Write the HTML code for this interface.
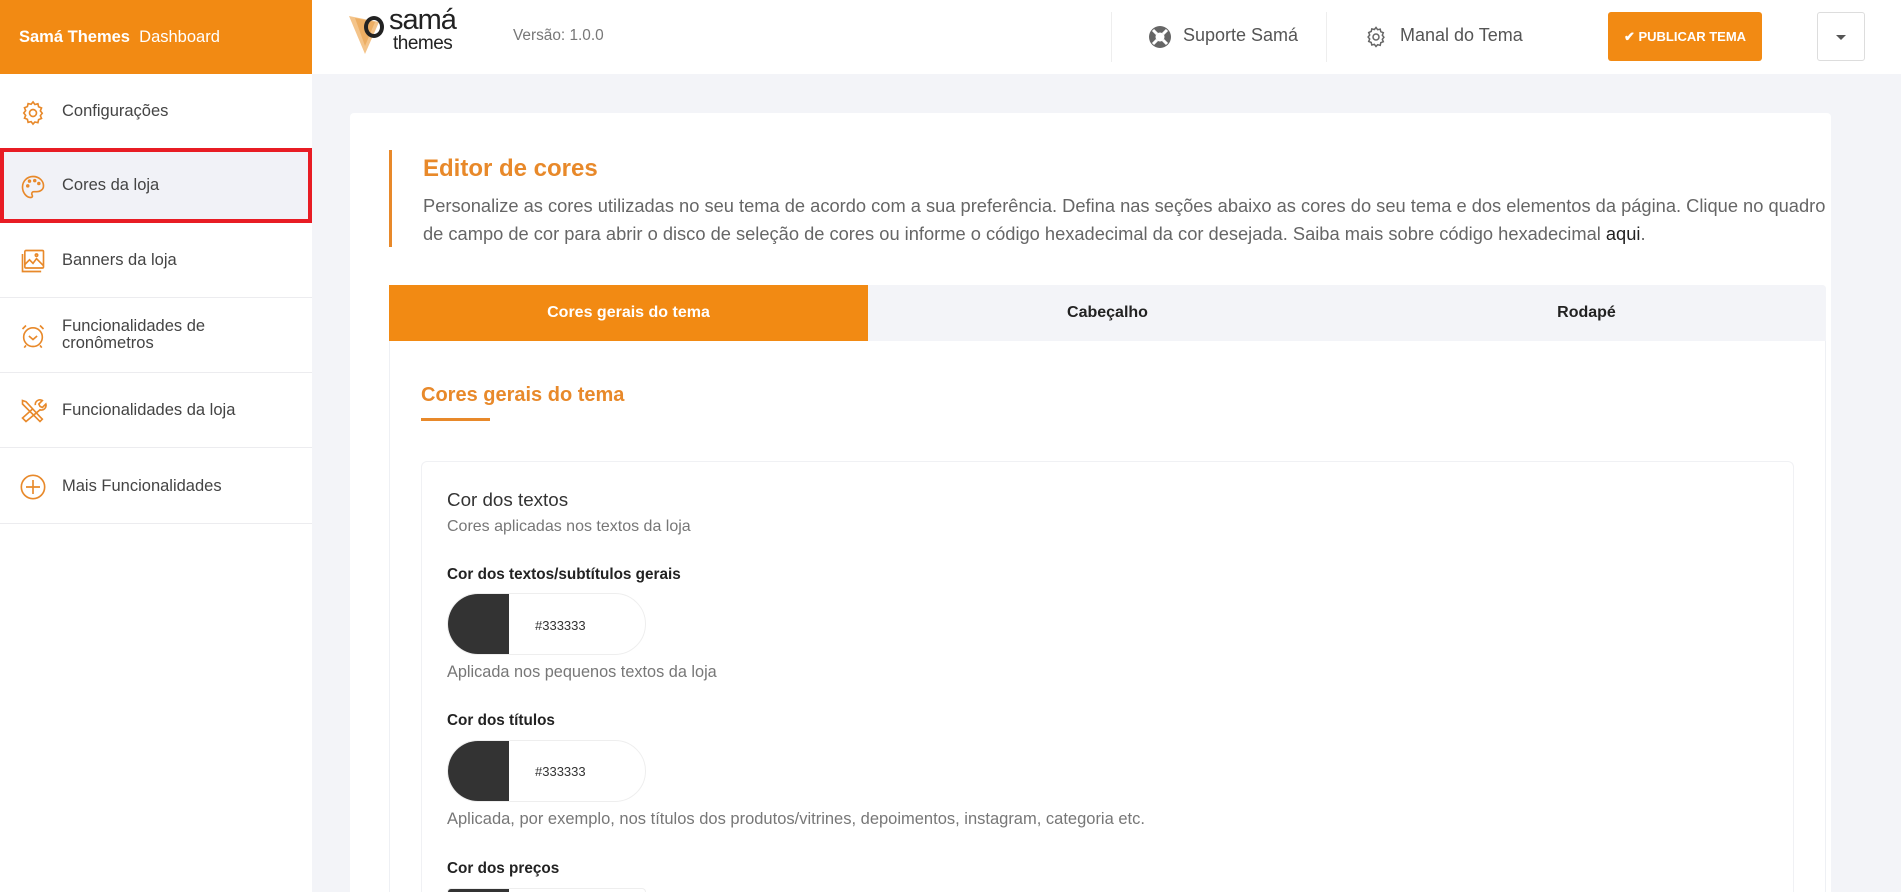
<!DOCTYPE html>
<html style="width:1901px;height:892px;overflow:hidden"><head><meta charset="utf-8"><style>
*{box-sizing:border-box;margin:0;padding:0}
body{width:1901px;height:892px;overflow:hidden;background:#f3f4f8;font-family:"Liberation Sans",sans-serif;color:#333;position:relative}
.abs{position:absolute}
.side{left:0;top:0;width:312px;height:892px;background:#fff}
.brand{left:0;top:0;width:312px;height:74px;background:#f28a13;color:#fff;font-size:16.5px;line-height:74px;padding-left:19px;white-space:nowrap}
.item{left:0;width:312px;height:75px;border-bottom:1px solid #ececef;display:flex;align-items:center;padding-left:62px;font-size:16.5px;color:#444}
.item svg{position:absolute;left:19px;top:50%;margin-top:-13px}
.top{left:312px;top:0;width:1589px;height:74px;background:#fff}
.card{left:350px;top:113px;width:1481px;height:779px;background:#fff;border-radius:4px 4px 0 0}
.t{white-space:nowrap}
</style></head><body>
<div class="abs side"></div>
<div class="abs brand"><b>Samá Themes</b>&nbsp; Dashboard</div>

<div class="abs item" style="top:74px;border:none">
<svg width="28" height="28" viewBox="0 0 24 24" fill="none" stroke="#e8892a" stroke-width="1.4"><circle cx="12" cy="12" r="3"/><path d="M12 2.5l1.6 2.2 2.6-.6.6 2.6 2.5 1-1 2.5 1.6 2-1.6 2.1 1 2.4-2.5 1-.6 2.6-2.6-.6L12 21.5l-1.6-2.1-2.6.6-.6-2.6-2.5-1 1-2.4L4.1 12l1.6-2-1-2.5 2.5-1 .6-2.6 2.6.6z"/></svg>Configurações</div>

<div class="abs item" style="top:148px;height:75px;background:#f1f2f7;border:4px solid #e81c24;padding-left:58px">
<svg width="28" height="28" viewBox="0 0 24 24" fill="none" stroke="#e8892a" stroke-width="1.4" style="left:15px"><path d="M12 3C7 3 3 7 3 12s3.5 9 7 9c1.5 0 1.8-1.2 1.2-2.2-.7-1.2 0-2.8 1.5-2.8H15c3.5 0 6-2 6-5 0-4.5-4-8-9-8z"/><circle cx="7.5" cy="11" r=".8"/><circle cx="9" cy="7" r=".8"/><circle cx="13.5" cy="6.5" r=".8"/><circle cx="17" cy="9" r=".8"/></svg>Cores da loja</div>

<div class="abs item" style="top:223px">
<svg width="28" height="28" viewBox="0 0 24 24" fill="none" stroke="#e8892a" stroke-width="1.4"><rect x="5" y="3" width="16" height="15" rx="1"/><path d="M3 6v15h16"/><path d="M5 15l4-4 3 3 3-4 6 6"/><circle cx="15" cy="7" r="1"/></svg>Banners da loja</div>

<div class="abs item" style="top:298px;line-height:17px">
<svg width="28" height="28" viewBox="0 0 24 24" fill="none" stroke="#e8892a" stroke-width="1.4"><circle cx="12" cy="13" r="8"/><path d="M8.5 12l3.5 3 3.5-3M3 6l3-3M21 6l-3-3M6 20l-1.5 2M18 20l1.5 2"/></svg>Funcionalidades de<br>cronômetros</div>

<div class="abs item" style="top:373px">
<svg width="28" height="28" viewBox="0 0 24 24" fill="none" stroke="#e8892a" stroke-width="1.4"><path d="M3 3l3 1 12 13 2 2-2 2-2-2L3 6zM14 7a4 4 0 0 1 6-4l-3 3 1 2 2 1 3-3a4 4 0 0 1-5 5L6 21l-3-3 9-8"/></svg>Funcionalidades da loja</div>

<div class="abs item" style="top:449px">
<svg width="28" height="28" viewBox="0 0 24 24" fill="none" stroke="#e8892a" stroke-width="1.4"><circle cx="12" cy="12" r="10"/><path d="M12 6v12M6 12h12"/></svg>Mais Funcionalidades</div>

<div class="abs top"></div>
<svg class="abs" style="left:349px;top:12px" width="40" height="44" viewBox="0 0 40 44"><path d="M0 4l30 6-14 32z" fill="#f4c48a"/><path d="M6 6l20 4-10 24z" fill="#e8a04a" opacity=".6"/></svg>
<div class="abs" style="left:364px;top:16px;width:20px;height:22px;border:4px solid #222;border-radius:50%"></div>
<div class="abs t" style="left:389px;top:4px;font-size:29px;color:#222;letter-spacing:-1px">samá</div>
<div class="abs t" style="left:393px;top:33px;font-size:19px;color:#222;letter-spacing:-.5px">themes</div>
<div class="abs t" style="left:513px;top:27px;font-size:15.4px;color:#777">Versão: 1.0.0</div>

<div class="abs" style="left:1111px;top:12px;width:1px;height:50px;background:#eee"></div>
<div class="abs" style="left:1326px;top:12px;width:1px;height:50px;background:#eee"></div>
<svg class="abs" style="left:1148px;top:25px" width="24" height="24" viewBox="0 0 24 24"><circle cx="12" cy="12" r="11" fill="#666"/><circle cx="12" cy="12" r="4.5" fill="#fff"/><path d="M5 5l4 4M19 5l-4 4M5 19l4-4M19 19l-4-4" stroke="#fff" stroke-width="3"/></svg>
<div class="abs t" style="left:1183px;top:25px;font-size:18px;color:#555">Suporte Samá</div>
<svg class="abs" style="left:1364px;top:25px" width="24" height="24" viewBox="0 0 24 24" fill="none" stroke="#666" stroke-width="1.5"><circle cx="12" cy="12" r="3"/><path d="M12 2.5l1.6 2.2 2.6-.6.6 2.6 2.5 1-1 2.5 1.6 2-1.6 2.1 1 2.4-2.5 1-.6 2.6-2.6-.6L12 21.5l-1.6-2.1-2.6.6-.6-2.6-2.5-1 1-2.4L4.1 12l1.6-2-1-2.5 2.5-1 .6-2.6 2.6.6z"/></svg>
<div class="abs t" style="left:1400px;top:25px;font-size:18px;color:#555">Manal do Tema</div>
<div class="abs t" style="left:1608px;top:12px;width:154px;height:49px;background:#f28a13;border-radius:3px;color:#fff;font-size:13px;font-weight:bold;text-align:center;line-height:49px">✔ PUBLICAR TEMA</div>
<div class="abs" style="left:1817px;top:12px;width:48px;height:49px;border:1px solid #ddd;border-radius:3px;background:#fff"></div>
<div class="abs" style="left:1836px;top:35px;border-left:5px solid transparent;border-right:5px solid transparent;border-top:5px solid #555"></div>

<div class="abs card"></div>
<div class="abs" style="left:389px;top:150px;width:3px;height:97px;background:#e8892a"></div>
<div class="abs t" style="left:423px;top:155px;font-size:24px;font-weight:bold;color:#e8892a">Editor de cores</div>
<div class="abs t" style="left:423px;top:192px;font-size:18.3px;line-height:28px;color:#666">Personalize as cores utilizadas no seu tema de acordo com a sua preferência. Defina nas seções abaixo as cores do seu tema e dos elementos da página. Clique no quadro<br>de campo de cor para abrir o disco de seleção de cores ou informe o código hexadecimal da cor desejada. Saiba mais sobre código hexadecimal <span style="color:#222">aqui</span>.</div>

<div class="abs" style="left:389px;top:285px;width:1437px;height:607px;border:1px solid #eef0f4;border-bottom:none;border-radius:4px 4px 0 0"></div>
<div class="abs" style="left:389px;top:285px;width:1437px;height:56px;background:#f3f4f8;border-radius:4px 4px 0 0"></div>
<div class="abs t" style="left:389px;top:285px;width:479px;height:56px;background:#f28a13;color:#fff;font-weight:bold;font-size:16px;text-align:center;line-height:56px">Cores gerais do tema</div>
<div class="abs t" style="left:868px;top:285px;width:479px;line-height:56px;text-align:center;font-weight:bold;font-size:16px;color:#222">Cabeçalho</div>
<div class="abs t" style="left:1347px;top:285px;width:479px;line-height:56px;text-align:center;font-weight:bold;font-size:16px;color:#222">Rodapé</div>

<div class="abs t" style="left:421px;top:384px;font-size:20px;font-weight:bold;color:#e8892a">Cores gerais do tema</div>
<div class="abs" style="left:421px;top:418px;width:69px;height:3px;background:#e8892a"></div>

<div class="abs" style="left:421px;top:461px;width:1373px;height:431px;border:1px solid #f0f1f4;border-bottom:none;border-radius:6px 6px 0 0"></div>
<div class="abs t" style="left:447px;top:489px;font-size:18.8px;color:#333">Cor dos textos</div>
<div class="abs t" style="left:447px;top:518px;font-size:16px;color:#777">Cores aplicadas nos textos da loja</div>

<div class="abs t" style="left:447px;top:566px;font-size:15.3px;font-weight:bold;color:#222">Cor dos textos/subtítulos gerais</div>
<div class="abs" style="left:447px;top:593px;width:199px;height:62px;border:1px solid #eee;border-radius:31px;overflow:hidden;background:#fff"><div style="width:61px;height:62px;background:#333"></div></div>
<div class="abs t" style="left:535px;top:618px;font-size:13px;color:#333">#333333</div>
<div class="abs t" style="left:447px;top:663px;font-size:16.3px;color:#777">Aplicada nos pequenos textos da loja</div>

<div class="abs t" style="left:447px;top:712px;font-size:15.3px;font-weight:bold;color:#222">Cor dos títulos</div>
<div class="abs" style="left:447px;top:740px;width:199px;height:62px;border:1px solid #eee;border-radius:31px;overflow:hidden;background:#fff"><div style="width:61px;height:62px;background:#333"></div></div>
<div class="abs t" style="left:535px;top:764px;font-size:13px;color:#333">#333333</div>
<div class="abs t" style="left:447px;top:810px;font-size:16.5px;color:#777">Aplicada, por exemplo, nos títulos dos produtos/vitrines, depoimentos, instagram, categoria etc.</div>

<div class="abs t" style="left:447px;top:860px;font-size:15.3px;font-weight:bold;color:#222">Cor dos preços</div>
<div class="abs" style="left:447px;top:888px;width:199px;height:4px;border:1px solid #eee;border-bottom:none;border-radius:31px 31px 0 0;overflow:hidden;background:#fff"><div style="width:61px;height:4px;background:#333"></div></div>
</body></html>
